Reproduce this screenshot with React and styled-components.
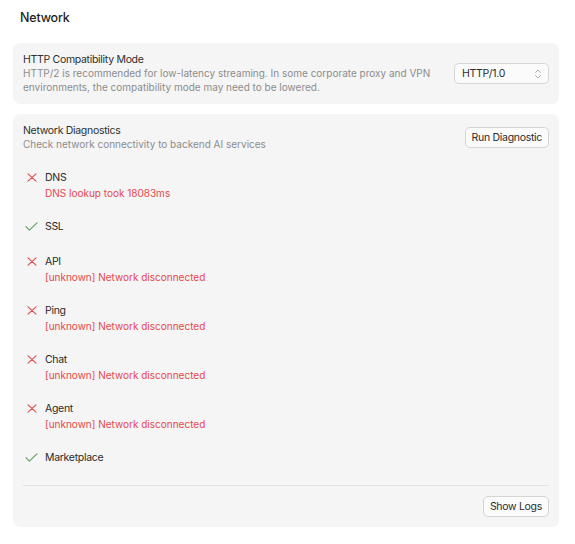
import React from "react";
import styled, { createGlobalStyle } from "styled-components";
import { ChevronsUpDown } from "lucide-react";

const GlobalStyle = createGlobalStyle`
  body {
    margin: 0;
    background: #ffffff;
    font-family: Inter, "Noto Sans", sans-serif;
    color: #2b2b2b;
  }
`;

const checks = [
  { name: "DNS", ok: false, detail: "DNS lookup took 18083ms" },
  { name: "SSL", ok: true },
  { name: "API", ok: false, detail: "[unknown] Network disconnected" },
  { name: "Ping", ok: false, detail: "[unknown] Network disconnected" },
  { name: "Chat", ok: false, detail: "[unknown] Network disconnected" },
  { name: "Agent", ok: false, detail: "[unknown] Network disconnected" },
  { name: "Marketplace", ok: true },
];

const FailIcon = () => (
  <svg width="10" height="9" viewBox="0 0 10 9" fill="none">
    <path d="M1 0.8 L9 8.2 M9 0.8 L1 8.2" stroke="#e5484d" strokeWidth="1.1" strokeLinecap="round" />
  </svg>
);

const PassIcon = () => (
  <svg width="13" height="9" viewBox="0 0 13 9" fill="none">
    <path d="M1 4.6 L4.4 8.1 L12 0.9" stroke="#5f9e5f" strokeWidth="1.1" strokeLinecap="round" strokeLinejoin="round" />
  </svg>
);

export default function App() {
  return (
    <>
      <GlobalStyle />
      <Page>
        <Title>Network</Title>
        <Card>
          <Row>
            <Info>
              <CardTitle>HTTP Compatibility Mode</CardTitle>
              <Desc>
                HTTP/2 is recommended for low-latency streaming. In some corporate proxy and VPN
                environments, the compatibility mode may need to be lowered.
              </Desc>
            </Info>
            <Select>
              <span>HTTP/1.0</span>
              <ChevronsUpDown size={12} strokeWidth={1.4} color="#8f8f8f" />
            </Select>
          </Row>
        </Card>
        <Card>
          <Row>
            <Info>
              <CardTitle>Network Diagnostics</CardTitle>
              <Desc>Check network connectivity to backend AI services</Desc>
            </Info>
            <Button>Run Diagnostic</Button>
          </Row>
          <List>
            {checks.map((c) => (
              <Item key={c.name}>
                <IconBox>{c.ok ? <PassIcon /> : <FailIcon />}</IconBox>
                <div>
                  <ItemName>{c.name}</ItemName>
                  {c.detail && <ItemDetail>{c.detail}</ItemDetail>}
                </div>
              </Item>
            ))}
          </List>
          <Divider />
          <Footer>
            <Button>Show Logs</Button>
          </Footer>
        </Card>
      </Page>
    </>
  );
}

const Page = styled.div`
  width: 546px;
  padding: 0 0 0 13px;
  display: flex;
  flex-direction: column;
  gap: 10px;
`;

const Title = styled.h1`
  margin: 0;
  padding: 10px 0 7px 7px;
  font-size: 12.5px;
  line-height: 16px;
  letter-spacing: -0.2px;
  font-weight: 500;
  color: #1f1f1f;
`;

const Card = styled.div`
  background: #f5f5f5;
  border-radius: 7px;
  padding: 10px;
`;

const Row = styled.div`
  display: flex;
  align-items: center;
  justify-content: space-between;
  gap: 12px;
`;

const Info = styled.div`
  display: flex;
  flex-direction: column;
`;

const CardTitle = styled.div`
  font-size: 10.5px;
  line-height: 14px;
  letter-spacing: -0.3px;
  color: #2f2f2f;
`;

const Desc = styled.div`
  font-size: 10px;
  line-height: 13.5px;
  color: #8c8c8c;
  max-width: 420px;
`;

const Select = styled.div`
  width: 95px;
  height: 21px;
  box-sizing: border-box;
  flex-shrink: 0;
  border: 1px solid #d6d6d6;
  border-radius: 5px;
  background: #fbfbfb;
  display: flex;
  align-items: center;
  justify-content: space-between;
  padding: 0 4px 0 7px;
  font-size: 10.5px;
  letter-spacing: -0.3px;
  color: #2b2b2b;
`;

const Button = styled.button`
  height: 21px;
  box-sizing: border-box;
  flex-shrink: 0;
  border: 1px solid #d4d4d4;
  border-radius: 5px;
  background: #fbfbfb;
  padding: 0 6px;
  font-family: Inter, "Noto Sans", sans-serif;
  font-size: 10.5px;
  letter-spacing: -0.3px;
  color: #2b2b2b;
`;

const List = styled.div`
  margin-top: 10px;
  display: flex;
  flex-direction: column;
  gap: 3px;
`;

const Item = styled.div`
  display: flex;
  align-items: flex-start;
  gap: 7px;
  padding: 8px 0 8px 2px;
`;

const IconBox = styled.div`
  width: 13px;
  height: 16px;
  display: flex;
  align-items: center;
  justify-content: center;
`;

const ItemName = styled.div`
  font-size: 10.5px;
  line-height: 16px;
  letter-spacing: -0.3px;
  color: #2b2b2b;
`;

const ItemDetail = styled.div`
  font-size: 10px;
  line-height: 14px;
  color: #e8474b;
`;

const Divider = styled.div`
  height: 1px;
  background: #e2e2e2;
  margin: 11px 0 10px;
`;

const Footer = styled.div`
  display: flex;
  justify-content: flex-end;
`;
